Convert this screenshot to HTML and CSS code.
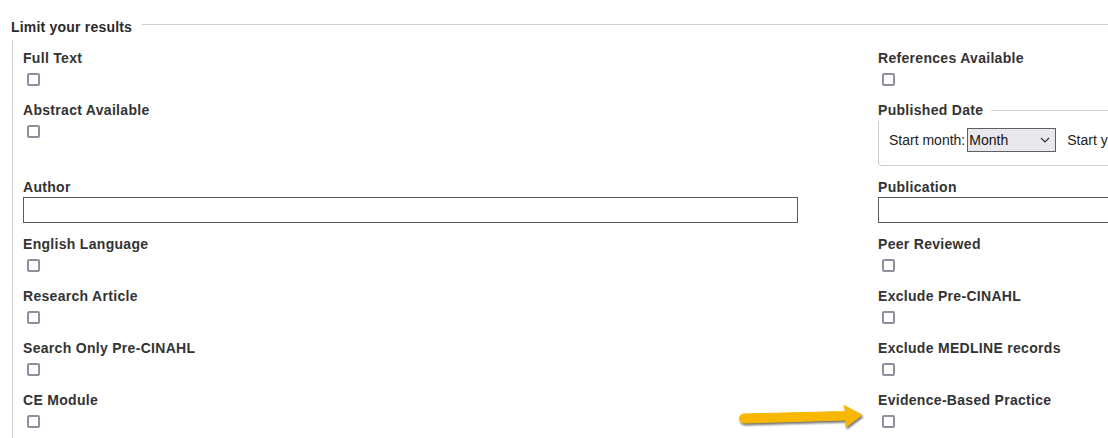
FILE: index.html
```html
<!DOCTYPE html>
<html>
<head>
<meta charset="utf-8">
<link rel="stylesheet" href="styles.css">
</head>
<body>
<div class="page">
  <div class="legend-row">
    <span class="legend">Limit your results</span>
    <span class="legend-line"></span>
  </div>
  <div class="limits">
    <div class="grid">
      <div class="cell"><label class="lbl">Full Text</label><input type="checkbox" class="cb"></div>
      <div class="cell"><label class="lbl">References Available</label><input type="checkbox" class="cb"></div>

      <div class="cell"><label class="lbl">Abstract Available</label><input type="checkbox" class="cb"></div>
      <div class="cell">
        <div class="sub-legend-row">
          <span class="lbl">Published Date</span>
          <span class="sub-line"></span>
        </div>
        <div class="date-box">
          <span class="date-text">Start month:</span><select class="sel"><option>Month</option></select><span class="date-text year">Start year:</span>
        </div>
      </div>

      <div class="cell"><label class="lbl">Author</label><input type="text" class="txt"></div>
      <div class="cell"><label class="lbl">Publication</label><input type="text" class="txt"></div>

      <div class="cell"><label class="lbl">English Language</label><input type="checkbox" class="cb"></div>
      <div class="cell"><label class="lbl">Peer Reviewed</label><input type="checkbox" class="cb"></div>

      <div class="cell"><label class="lbl">Research Article</label><input type="checkbox" class="cb"></div>
      <div class="cell"><label class="lbl">Exclude Pre-CINAHL</label><input type="checkbox" class="cb"></div>

      <div class="cell"><label class="lbl">Search Only Pre-CINAHL</label><input type="checkbox" class="cb"></div>
      <div class="cell"><label class="lbl">Exclude MEDLINE records</label><input type="checkbox" class="cb"></div>

      <div class="cell"><label class="lbl">CE Module</label><input type="checkbox" class="cb"></div>
      <div class="cell"><label class="lbl">Evidence-Based Practice</label><input type="checkbox" class="cb"></div>
    </div>
  </div>
</div>
<svg class="arrow" width="140" height="35" viewBox="0 0 140 35" xmlns="http://www.w3.org/2000/svg">
  <path d="M14,14 L116,11.5 L114,5.5 L132,15 L116,27 L116,20 L14,23 A4.5,4.5 0 0 1 14,14 Z" fill="#f8b700" stroke="#f8b700" stroke-width="1" stroke-linejoin="round"/>
</svg>
</body>
</html>
```
FILE: styles.css
```css
html, body {
  margin: 0;
  padding: 0;
  background: #fff;
  overflow: hidden;
}
body {
  width: 1108px;
  height: 438px;
  position: relative;
  font-family: "Liberation Sans", Arial, sans-serif;
  color: #333;
}
.page {
  width: 1700px;
  padding-top: 18px;
}
.legend-row {
  display: flex;
  align-items: flex-start;
  padding-left: 11px;
}
.legend {
  font-weight: bold;
  font-size: 14px;
  line-height: 18px;
  color: #2a2a2a;
  letter-spacing: 0.2px;
}
.legend-line {
  flex: 1;
  border-top: 1px solid #cfcfcf;
  margin-top: 6px;
  margin-left: 10px;
}
.limits {
  margin-top: 4px;
  margin-left: 12px;
  border-left: 1px solid #cfcfcf;
  padding: 9px 0 0 10px;
  height: 420px;
}
.grid {
  display: grid;
  grid-template-columns: 775px 775px;
  column-gap: 80px;
  row-gap: 12px;
  align-items: start;
}
.cell {
  display: flex;
  flex-direction: column;
  align-items: flex-start;
}
.lbl {
  display: block;
  font-weight: bold;
  font-size: 14px;
  line-height: 18px;
  color: #333;
  letter-spacing: 0.3px;
}
.cb {
  appearance: none;
  -webkit-appearance: none;
  width: 13px;
  height: 13px;
  margin: 6px 0 3px 4px;
  border: 2px solid #8f8f9d;
  border-radius: 2px;
  background: #fff;
  box-sizing: border-box;
}
.txt {
  box-sizing: border-box;
  width: 775px;
  height: 26px;
  margin: 1px 0 0 0;
  border: 1px solid #5a5a5a;
  padding: 0 4px;
  background: #fff;
}
.sub-legend-row {
  display: flex;
  align-items: flex-start;
  width: 100%;
}
.sub-line {
  flex: 1;
  border-top: 1px solid #cfcfcf;
  margin-top: 9px;
  margin-left: 8px;
}
.date-box {
  box-sizing: border-box;
  align-self: stretch;
  margin-top: 2px;
  height: 45px;
  border-left: 1px solid #cfcfcf;
  border-bottom: 1px solid #cfcfcf;
  border-bottom-left-radius: 4px;
  padding: 7px 0 0 10px;
  display: flex;
  align-items: flex-start;
}
.date-text {
  font-size: 14px;
  line-height: 24px;
  color: #222;
}
.year {
  margin-left: 11px;
}
.sel {
  appearance: none;
  -webkit-appearance: none;
  box-sizing: border-box;
  width: 89px;
  height: 24px;
  margin-left: 2px;
  border: 1px solid #5f5f5f;
  background: #e9e9ed url("data:image/svg+xml,%3Csvg xmlns='http://www.w3.org/2000/svg' width='10' height='6' viewBox='0 0 10 6'%3E%3Cpath d='M1 1 L5 5 L9 1' fill='none' stroke='%23333' stroke-width='1.2'/%3E%3C/svg%3E") no-repeat right 5px center;
  font-family: "Liberation Sans", Arial, sans-serif;
  font-size: 14px;
  color: #111;
  padding: 0 0 0 1px;
  border-radius: 0;
}
.arrow {
  position: absolute;
  left: 730px;
  top: 400px;
  filter: drop-shadow(1px 2px 1px rgba(0, 0, 0, 0.55));
}
```
